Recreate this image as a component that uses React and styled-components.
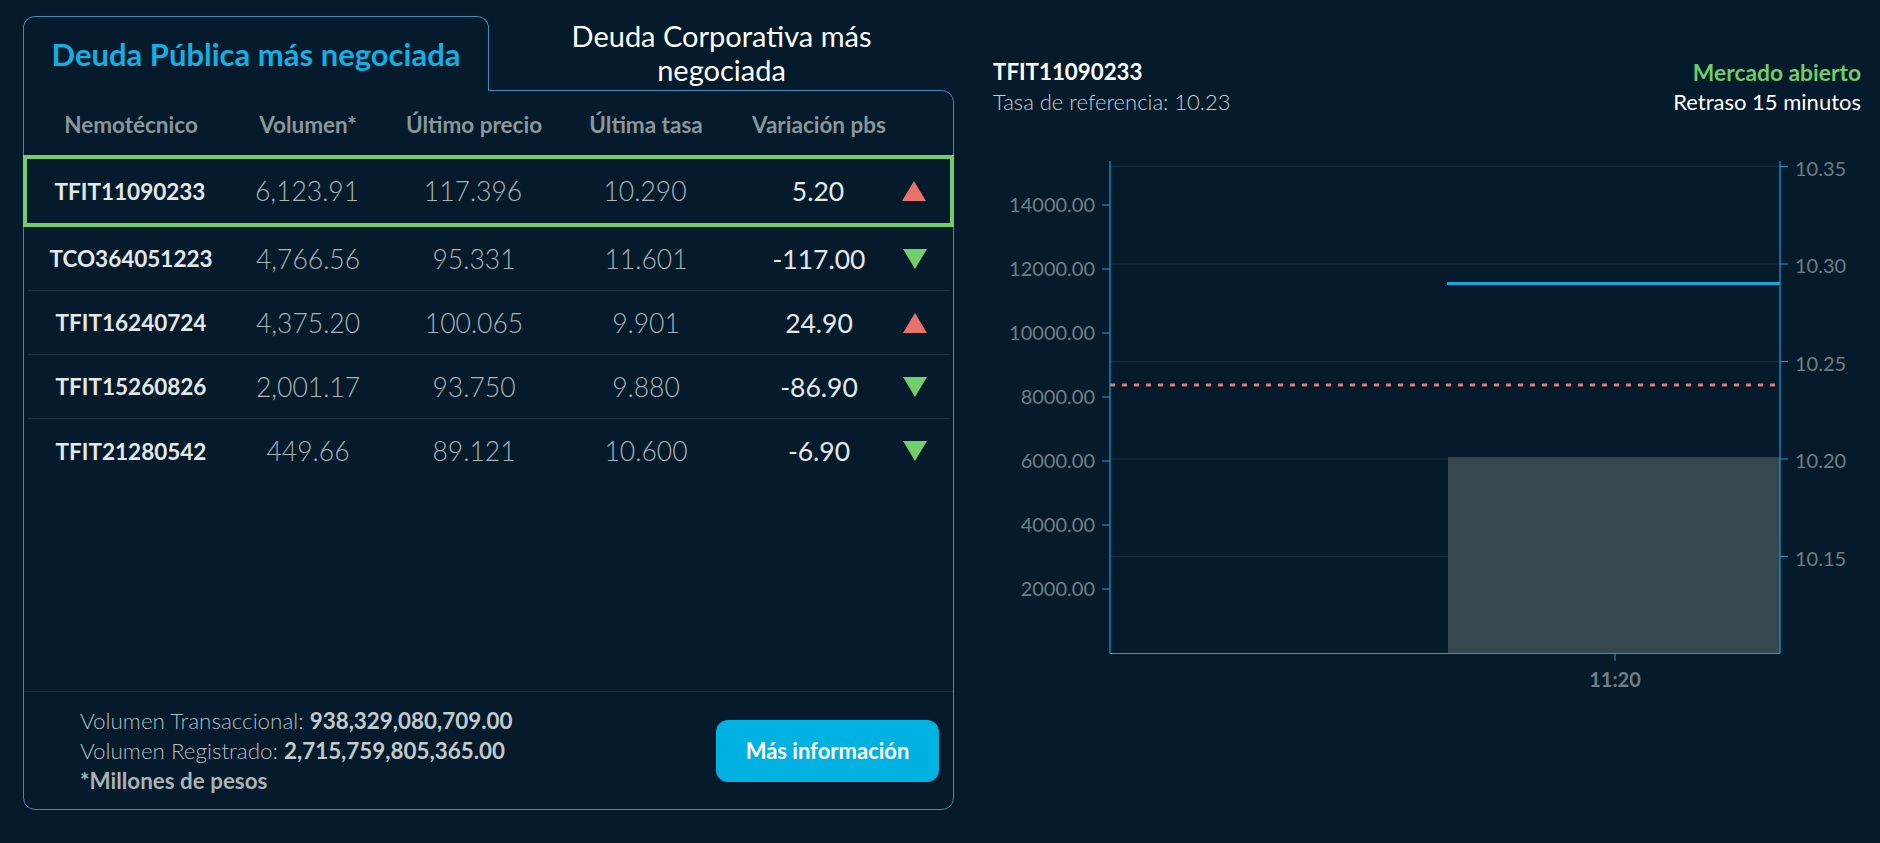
import React from 'react'
import styled, { createGlobalStyle } from 'styled-components'

const rows = [
  { id: 'TFIT11090233', vol: '6,123.91', price: '117.396', rate: '10.290', change: '5.20', up: true },
  { id: 'TCO364051223', vol: '4,766.56', price: '95.331', rate: '11.601', change: '-117.00', up: false },
  { id: 'TFIT16240724', vol: '4,375.20', price: '100.065', rate: '9.901', change: '24.90', up: true },
  { id: 'TFIT15260826', vol: '2,001.17', price: '93.750', rate: '9.880', change: '-86.90', up: false },
  { id: 'TFIT21280542', vol: '449.66', price: '89.121', rate: '10.600', change: '-6.90', up: false },
]

const leftTicks = [2000, 4000, 6000, 8000, 10000, 12000, 14000]
const rightTicks = [10.15, 10.2, 10.25, 10.3, 10.35]

// chart geometry
const X0 = 117
const X1 = 787
const Y0 = 503
const volY = v => Y0 - (v / 2000) * 64
const rateY = r => 309 - ((r - 10.2) / 0.05) * 97.5

export default () => (
  <>
    <GlobalStyle />
    <Page>
      <Panel>
        <Tabs>
          <ActiveTab>Deuda Pública más negociada</ActiveTab>
          <Tab>
            <TabLabel>Deuda Corporativa más negociada</TabLabel>
          </Tab>
        </Tabs>
        <Body>
          <Rows>
            <HeaderRow>
              <span>Nemotécnico</span>
              <span>Volumen*</span>
              <span>Último precio</span>
              <span>Última tasa</span>
              <ChangeCell>Variación pbs</ChangeCell>
              <span />
            </HeaderRow>
            {rows.map((r, i) => (
              <Row key={r.id} selected={i === 0}>
                <IdCell>{r.id}</IdCell>
                <span>{r.vol}</span>
                <span>{r.price}</span>
                <span>{r.rate}</span>
                <ChangeCell bright>{r.change}</ChangeCell>
                <Arrow up={r.up} />
              </Row>
            ))}
          </Rows>
          <Footer>
            <Totals>
              <div>Volumen Transaccional: <b>938,329,080,709.00</b></div>
              <div>Volumen Registrado: <b>2,715,759,805,365.00</b></div>
              <Note>*Millones de pesos</Note>
            </Totals>
            <Button>Más información</Button>
          </Footer>
        </Body>
      </Panel>

      <Side>
        <Info>
          <div>
            <Symbol>TFIT11090233</Symbol>
            <Muted>Tasa de referencia: 10.23</Muted>
          </div>
          <Status>
            <Open>Mercado abierto</Open>
            <div>Retraso 15 minutos</div>
          </Status>
        </Info>
        <Chart width="868" height="550" viewBox="0 0 868 550">
          {rightTicks.map(t => (
            <line key={t} x1={X0} x2={X1} y1={rateY(t)} y2={rateY(t)} stroke="#163244" strokeWidth="1" />
          ))}
          <rect x="455" y={volY(6123.91)} width={X1 - 455} height={Y0 - volY(6123.91)} fill="#36474f" />
          <line x1="454" x2={X1} y1={rateY(10.29)} y2={rateY(10.29)} stroke="#14a8dc" strokeWidth="3" />
          <line x1={X0} x2={X1} y1="235" y2="235" stroke="#e07b72" strokeWidth="3" strokeDasharray="5 7" />
          <line x1={X0} x2={X0} y1="11" y2={Y0 + 0.5} stroke="#1c9fd6" strokeWidth="1.2" />
          <line x1={X1} x2={X1} y1="11" y2={Y0 + 0.5} stroke="#1c9fd6" strokeWidth="1.2" />
          <line x1={X0} x2={X1} y1={Y0 + 0.5} y2={Y0 + 0.5} stroke="#1c9fd6" strokeWidth="1.2" />
          {leftTicks.map(t => (
            <g key={t}>
              <line x1={X0 - 8} x2={X0} y1={volY(t)} y2={volY(t)} stroke="#1c9fd6" strokeWidth="1" />
              <AxisText x={X0 - 15} y={volY(t) + 7} textAnchor="end">{t.toFixed(2)}</AxisText>
            </g>
          ))}
          {rightTicks.map(t => (
            <g key={t}>
              <line x1={X1} x2={X1 + 8} y1={rateY(t)} y2={rateY(t)} stroke="#1c9fd6" strokeWidth="1" />
              <AxisText x={X1 + 15} y={rateY(t) + 9}>{t.toFixed(2)}</AxisText>
            </g>
          ))}
          <line x1="622" x2="622" y1={Y0} y2={Y0 + 8} stroke="#1c9fd6" strokeWidth="1" />
          <AxisText x="622" y="537" textAnchor="middle" bold>11:20</AxisText>
        </Chart>
      </Side>
    </Page>
  </>
)

const GlobalStyle = createGlobalStyle`
  body {
    margin: 0;
    background: #051b2b;
    font-family: Lato, 'Open Sans', sans-serif;
  }
`
const Page = styled.div`
  display: flex;
  padding: 16px 19px 0 23px;
  height: 843px;
  box-sizing: border-box;
`
const Panel = styled.div`
  width: 931px;
  display: flex;
  flex-direction: column;
`
const Tabs = styled.div`
  display: flex;
  height: 74px;
`
const ActiveTab = styled.div`
  position: relative;
  z-index: 1;
  width: 466px;
  height: 75px;
  margin-bottom: -1px;
  box-sizing: border-box;
  border: 1px solid #3a8dbb;
  border-bottom: none;
  border-radius: 12px 12px 0 0;
  background: #051b2b;
  display: flex;
  align-items: center;
  justify-content: center;
  color: #13afe3;
  font-size: 31px;
  font-weight: 700;
`
const Tab = styled.div`
  flex: 1;
  display: flex;
  align-items: center;
  justify-content: center;
`
const TabLabel = styled.div`
  max-width: 340px;
  text-align: center;
  color: #fff;
  font-size: 29px;
  line-height: 34px;
`
const Body = styled.div`
  height: 720px;
  box-sizing: border-box;
  border: 1px solid #3a8dbb;
  border-radius: 0 12px 12px 12px;
  display: flex;
  flex-direction: column;
`
const Rows = styled.div`
  flex: 1;
  padding: 0 4px;
`
const Grid = styled.div`
  display: grid;
  grid-template-columns: 206px 148px 184px 160px 177px 24px 1fr;
  align-items: center;
  justify-items: center;
  text-align: center;
  white-space: nowrap;
`
const HeaderRow = styled(Grid)`
  height: 64px;
  padding-top: 3px;
  box-sizing: border-box;
  color: #8b959c;
  font-size: 22.5px;
  font-weight: 700;
`
const Row = styled(Grid)`
  box-sizing: border-box;
  height: ${p => (p.selected ? '72px' : '64px')};
  margin: ${p => (p.selected ? '0 -5px' : '0')};
  border: ${p => (p.selected ? '4px solid #72cd6b' : 'none')};
  border-bottom: ${p => (p.selected ? '4px solid #72cd6b' : '1px solid #1d3444')};
  color: #a9b2b8;
  font-size: 26.5px;
  font-weight: 300;
  &:last-child {
    border-bottom: none;
  }
`
const IdCell = styled.span`
  color: #e4e8eb;
  font-weight: 700;
  font-size: 22.5px;
`
const ChangeCell = styled.span`
  padding-left: 9px;
  color: ${p => (p.bright ? '#e4e8eb' : 'inherit')};
  font-weight: ${p => (p.bright ? 400 : 'inherit')};
`
const Arrow = styled.span`
  width: 0;
  height: 0;
  border-left: 12px solid transparent;
  border-right: 12px solid transparent;
  ${p => (p.up
    ? 'border-bottom: 20px solid #e9716b;'
    : 'border-top: 20px solid #72cd6b;')}
`
const Footer = styled.div`
  height: 118px;
  box-sizing: border-box;
  border-top: 1px solid #1d3444;
  display: flex;
  align-items: center;
  justify-content: space-between;
  padding: 0 14px 0 56px;
`
const Totals = styled.div`
  color: #b4bcc2;
  font-size: 22.4px;
  line-height: 30px;
  font-weight: 300;
  b {
    color: #c3c9cd;
    font-weight: 700;
  }
`
const Note = styled.div`
  font-weight: 700;
  color: #aab2b8;
`
const Button = styled.div`
  width: 223px;
  height: 62px;
  border-radius: 12px;
  background: #00b2e2;
  color: #fff;
  font-size: 22px;
  font-weight: 700;
  display: flex;
  align-items: center;
  justify-content: center;
  cursor: pointer;
`
const Side = styled.div`
  flex: 1;
  margin-left: 39px;
  padding-top: 41px;
  display: flex;
  flex-direction: column;
`
const Info = styled.div`
  display: flex;
  justify-content: space-between;
  font-size: 22px;
  line-height: 30px;
  color: #fff;
`
const Symbol = styled.div`
  font-weight: 700;
  font-size: 22.3px;
`
const Muted = styled.div`
  color: #c6ccd0;
  font-weight: 300;
`
const Status = styled.div`
  text-align: right;
`
const Open = styled.div`
  color: #6fcd67;
  font-weight: 700;
  font-size: 22.8px;
`
const Chart = styled.svg`
  display: block;
  margin-top: 33px;
`
const AxisText = styled.text`
  fill: #6f7d87;
  font-family: Lato, sans-serif;
  font-size: 20px;
  font-weight: ${p => (p.bold ? 700 : 400)};
`
